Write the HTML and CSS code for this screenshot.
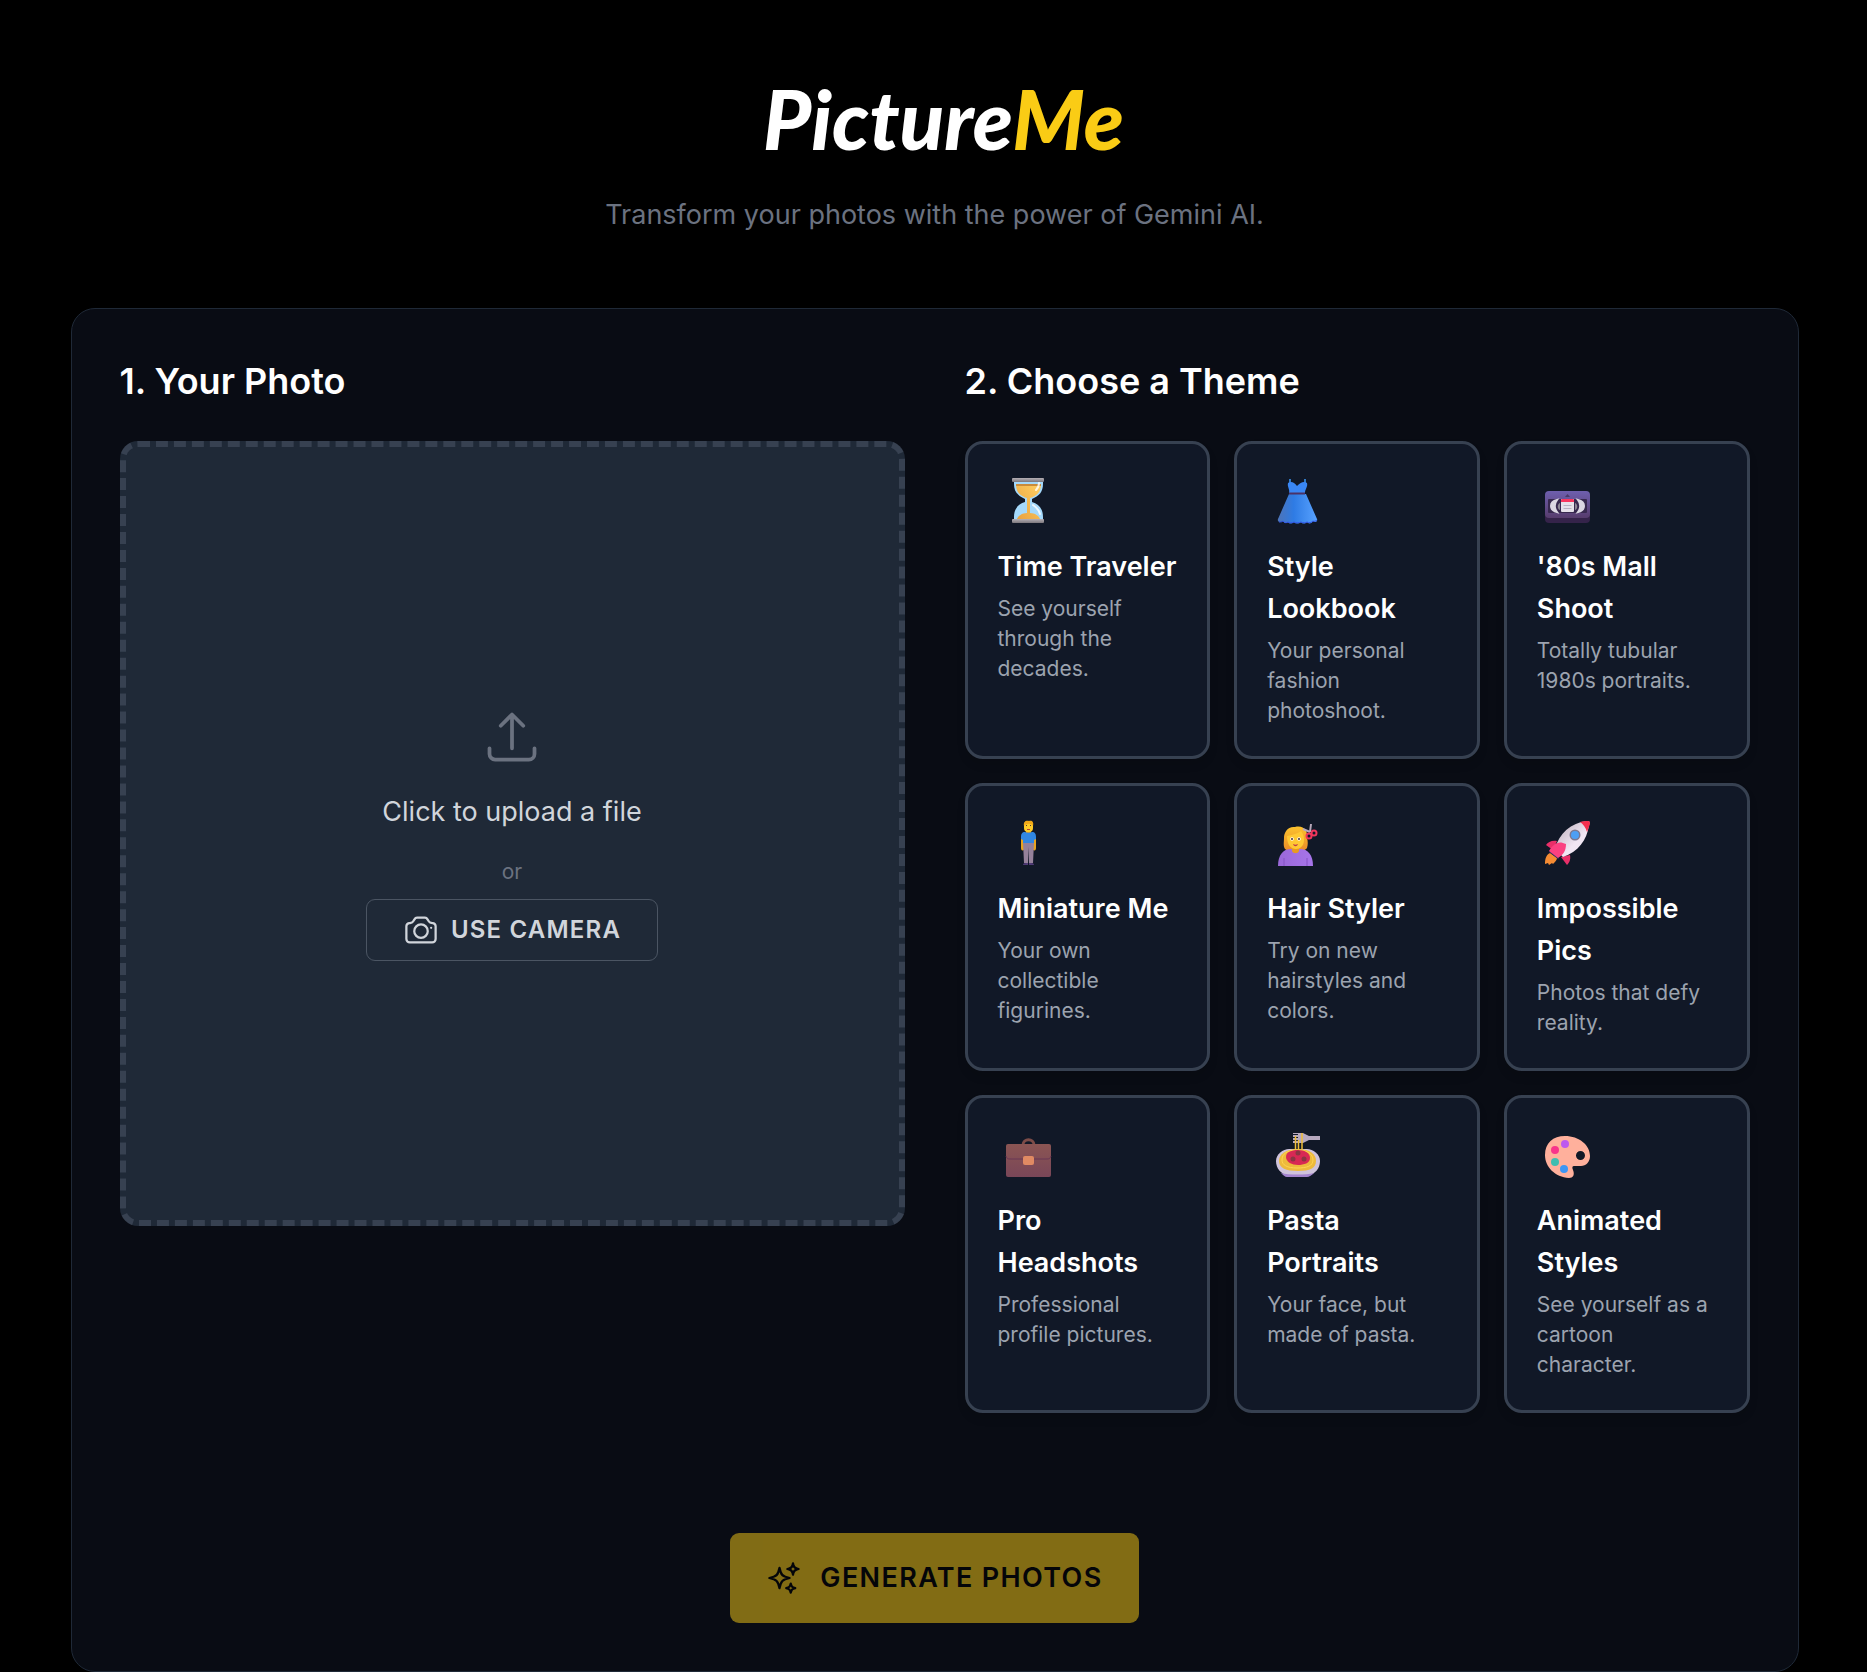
FILE: index.html
```html
<!DOCTYPE html>
<html lang="en">
<head>
  <meta charset="UTF-8">
  <meta name="viewport" content="width=device-width, initial-scale=1.0">
  <title>PictureMe</title>
  <link rel="stylesheet" href="styles.css">
</head>
<body>
  <div class="container">
    <header class="header">
      <h1 class="logo">Picture<span>Me</span></h1>
      <p class="tagline">Transform your photos with the power of Gemini AI.</p>
    </header>

    <main class="panel">
      <div class="columns">
        <section>
          <h2>1. Your Photo</h2>
          <div class="dropzone">
            <input type="file" id="photo" class="file-input" accept="image/*">
            <label for="photo" class="upload-label">
              <svg class="upload-icon" viewBox="0 0 24 24" fill="none" stroke="currentColor" stroke-width="1.5" stroke-linecap="round" stroke-linejoin="round">
                <path d="M3 16.5v2.25A2.25 2.25 0 0 0 5.25 21h13.5A2.25 2.25 0 0 0 21 18.75V16.5m-13.5-9L12 3m0 0 4.5 4.5M12 3v13.5"/>
              </svg>
              Click to upload a file
            </label>
            <span class="or">or</span>
            <button type="button" class="camera-button">
              <svg class="button-icon" viewBox="0 0 24 24" fill="none" stroke="currentColor" stroke-width="1.5" stroke-linecap="round" stroke-linejoin="round">
                <path d="M6.827 6.175A2.31 2.31 0 0 1 5.186 7.23c-.38.054-.757.112-1.134.175C2.999 7.58 2.25 8.507 2.25 9.574V18a2.25 2.25 0 0 0 2.25 2.25h15A2.25 2.25 0 0 0 21.75 18V9.574c0-1.067-.75-1.994-1.802-2.169a47.865 47.865 0 0 0-1.134-.175 2.31 2.31 0 0 1-1.64-1.055l-.822-1.316a2.192 2.192 0 0 0-1.736-1.039 48.774 48.774 0 0 0-5.232 0 2.192 2.192 0 0 0-1.736 1.039l-.821 1.316Z"/>
                <path d="M16.5 12.75a4.5 4.5 0 1 1-9 0 4.5 4.5 0 0 1 9 0ZM18.75 10.5h.008v.008h-.008V10.5Z"/>
              </svg>
              USE CAMERA
            </button>
          </div>
        </section>

        <section>
          <h2>2. Choose a Theme</h2>
          <div class="themes">
            <button type="button" class="theme">
              <svg class="emoji" viewBox="0 0 60 60">
                <defs>
                  <linearGradient id="sand" x1="0" x2="1" y1="1" y2="0">
                    <stop offset="0" stop-color="#e9a13f"/>
                    <stop offset="1" stop-color="#ffd063"/>
                  </linearGradient>
                  <linearGradient id="metal" x1="0" x2="0" y1="0" y2="1">
                    <stop offset="0" stop-color="#b5afb5"/>
                    <stop offset="1" stop-color="#7c777c"/>
                  </linearGradient>
                </defs>
                <path d="M16 7h29v3c0 8-4 12-11 15v3c7 2 11 7 11 15v3H16v-3c0-8 4-13 11-15v-3c-7-3-11-7-11-15z" fill="#a5d9fb"/>
                <path d="M18 10h25c0 8-4 12-11 14v15c5 0 9 3 10 6H19c1-3 5-6 10-6V24c-7-2-11-6-11-14z" fill="url(#sand)"/>
                <path d="M18 10h25v2H18z" fill="#c98b3b"/>
                <path d="M41 9c0 3-1 5-3 7M35 31c3 2 6 5 7 9" fill="none" stroke="#fff" stroke-width="2" stroke-linecap="round" opacity=".8"/>
                <rect x="14" y="4" width="32" height="4" rx="1" fill="url(#metal)"/>
                <rect x="14" y="45" width="32" height="4" rx="1" fill="url(#metal)"/>
              </svg>
              <span class="theme-name">Time Traveler</span>
              <span class="theme-text">See yourself through the decades.</span>
            </button>

            <button type="button" class="theme">
              <svg class="emoji" viewBox="0 0 60 60">
                <defs>
                  <linearGradient id="dress" x1="0" x2="1" y1="0" y2="0">
                    <stop offset="0" stop-color="#4d74b8"/>
                    <stop offset=".4" stop-color="#2e7be4"/>
                    <stop offset="1" stop-color="#58a2ff"/>
                  </linearGradient>
                </defs>
                <path d="M23 5v5M38 5v5" stroke="#3179c4" stroke-width="2"/>
                <path d="M21 9c3-2 6-1 9 3 4-4 7-5 10-3 1 4-2 6-2 10l-2 2H24l-2-2c1-4-2-6-1-10z" fill="#3a87f5"/>
                <path d="M22 20h17l11 25c1 3-2 4-4 2-1 3-5 3-6 1-2 2-5 2-6 0-2 2-6 2-7 0-2 2-5 2-6 0-2 2-4 1-5-1-3 2-6 1-5-2z" fill="url(#dress)"/>
                <path d="M12 48c2 0 3 0 4-1 1 2 4 2 5 1 1 1 4 1 6 0 2 1 5 1 7 0 2 1 5 1 6 0 2 1 4 1 6-1 1 1 3 0 4-1" fill="none" stroke="#3557e8"/>
                <path d="M22 19.500h16" stroke="#4b3267" stroke-width="2"/>
              </svg>
              <span class="theme-name">Style Lookbook</span>
              <span class="theme-text">Your personal fashion photoshoot.</span>
            </button>

            <button type="button" class="theme">
              <svg class="emoji" viewBox="0 0 60 60">
                <defs>
                  <linearGradient id="tape" x1="0" x2="0" y1="0" y2="1">
                    <stop offset="0" stop-color="#6e5fae"/>
                    <stop offset="1" stop-color="#573c6d"/>
                  </linearGradient>
                </defs>
                <rect x="8" y="22" width="45" height="27" rx="4" fill="#35234a"/>
                <rect x="8" y="17" width="45" height="27" rx="4" fill="url(#tape)"/>
                <rect x="11" y="25" width="39" height="14" rx="1" fill="#38294f"/>
                <path d="M20 26c-4 1-6 3-6 6s2 5 6 6c-3-4-3-8 0-12zM41 26c4 1 6 3 6 6s-2 5-6 6c3-4 3-8 0-12z" fill="#dcd7e3" stroke="#dcd7e3" stroke-width="2"/>
                <path d="M23 29c-3 1-3 6 0 7zM38 29c3 1 3 6 0 7z" fill="#8c8594"/>
                <rect x="24" y="25" width="13" height="13" rx="1" fill="#e6e1ea"/>
                <path d="M24 28v-2l1-1h11l1 1v2z" fill="#f8375f"/>
                <path d="M26.500 31.500h8M26.500 34.500h8" stroke="#b9b2c1"/>
                <path d="M28 23l2.500-3 2.500 3z" fill="#493a68"/>
              </svg>
              <span class="theme-name">'80s Mall Shoot</span>
              <span class="theme-text">Totally tubular 1980s portraits.</span>
            </button>

            <button type="button" class="theme">
              <svg class="emoji" viewBox="0 0 60 60">
                <path d="M23 21v11c0 2 1 3 3 2V20zM38 21v11c0 2-1 3-3 2V20z" fill="#e9a51e"/>
                <path d="M28 13h5v5h-5z" fill="#e9a11e"/>
                <rect x="26" y="5" width="9" height="11" rx="4" fill="#ffca28"/>
                <path d="M26 10c-1-4 2-6 5-5 3-1 5 1 4 5-1-3-7-3-9 0z" fill="#f2a817"/>
                <path d="M28 9.500h1M32 9.500h1" stroke="#5b3a32"/>
                <path d="M29 13.500h3" stroke="#b74733"/>
                <path d="M27 16c2 1 5 1 7 0 3 0 4 2 4 5v2l-2 1v4H25v-4l-2-1v-2c0-3 1-5 4-5z" fill="#3187e2"/>
                <path d="M25 27h11l-1 20h-4l-.5-16-.5 16h-4z" fill="#96819a"/>
                <path d="M25 49c0-2 2-2 5-2v2zM31 47c3 0 5 0 5 2h-5z" fill="#503a76"/>
              </svg>
              <span class="theme-name">Miniature Me</span>
              <span class="theme-text">Your own collectible figurines.</span>
            </button>

            <button type="button" class="theme">
              <svg class="emoji" viewBox="0 0 60 60">
                <defs>
                  <linearGradient id="shirt" x1="0" x2="1" y1="0" y2="0">
                    <stop offset="0" stop-color="#9a68d8"/>
                    <stop offset="1" stop-color="#a775ea"/>
                  </linearGradient>
                  <linearGradient id="hair" x1="0" x2="0" y1="0" y2="1">
                    <stop offset="0" stop-color="#fcc22e"/>
                    <stop offset="1" stop-color="#e98a27"/>
                  </linearGradient>
                </defs>
                <path d="M28 11c9-2 13 4 12 11 1 3 1 7 0 10-4 5-18 5-22 1-2-3-1-7-1-11 0-6 4-12 11-11z" fill="url(#hair)"/>
                <path d="M11 50c0-11 5-17 13-17h9c8 0 13 6 13 17z" fill="url(#shirt)"/>
                <path d="M17 42v8M40 42v8" stroke="#8553c4"/>
                <path d="M25 30h7v5c-1 3-6 3-7 0z" fill="#e89b1f"/>
                <path d="M20 20c5-1 10-2 14-5 2 3 3 5 3 9 0 6-4 9-8 9-5 0-9-4-9-13z" fill="#ffc933"/>
                <circle cx="25" cy="23" r="1.800" fill="#fff"/>
                <circle cx="32" cy="23" r="1.800" fill="#fff"/>
                <circle cx="25" cy="23" r="1" fill="#442b32"/>
                <circle cx="32" cy="23" r="1" fill="#442b32"/>
                <path d="M26 28c2 1 3 1 5 0-1 3-4 3-5 0z" fill="#c23b4a"/>
                <path d="M36 13l7 3M44 8l-1 8" stroke="#b7a7b9" stroke-width="2"/>
                <circle cx="42" cy="20" r="2.500" fill="none" stroke="#f0365c" stroke-width="2"/>
                <circle cx="47" cy="17" r="2.500" fill="none" stroke="#f0365c" stroke-width="2"/>
              </svg>
              <span class="theme-name">Hair Styler</span>
              <span class="theme-text">Try on new hairstyles and colors.</span>
            </button>

            <button type="button" class="theme">
              <svg class="emoji" viewBox="0 0 60 60">
                <defs>
                  <linearGradient id="hull" x1="0" x2="1" y1="0" y2="1">
                    <stop offset=".2" stop-color="#c9bcc9"/>
                    <stop offset=".6" stop-color="#f1e6f3"/>
                  </linearGradient>
                </defs>
                <path d="M13 37c-4 2-5 6-5 11l3-1 1 2 3-2 1 1c2-2 4-4 4-6z" fill="#f58b33"/>
                <path d="M20 25c-5-1-9 1-11 4l7 5zM33 39c1 5-1 8-3 10l-6-8z" fill="#e92f69"/>
                <path d="M18 33C22 17 34 7 50 5c3 0 3 1 2 4-2 15-11 27-26 32z" fill="url(#hull)"/>
                <path d="M43 6c3-1 5-1 8-1 2 0 2 1 2 3-1 3-2 5-3 8-1-4-4-8-7-10z" fill="#f42f4e"/>
                <path d="M13 35l9 7-1 1-9-7z" fill="#36336f"/>
                <path d="M12 35c4-7 9-11 17-7 0 7-3 11-8 14z" fill="#fb4181"/>
                <circle cx="38" cy="19" r="5.500" fill="#7c7890"/>
                <circle cx="38" cy="19" r="4" fill="#4d9ff4"/>
              </svg>
              <span class="theme-name">Impossible Pics</span>
              <span class="theme-text">Photos that defy reality.</span>
            </button>

            <button type="button" class="theme">
              <svg class="emoji" viewBox="0 0 60 60">
                <defs>
                  <linearGradient id="leather" x1="0" x2="0" y1="0" y2="1">
                    <stop offset="0" stop-color="#8b5553"/>
                    <stop offset="1" stop-color="#794658"/>
                  </linearGradient>
                </defs>
                <path d="M25 17c0-7 11-7 11 0" fill="none" stroke="#7d4c48" stroke-width="3"/>
                <rect x="8" y="16" width="45" height="33" rx="2" fill="url(#leather)"/>
                <path d="M8 28c1 3 2 3 5 3h35c3 0 4 0 5-3" fill="none" stroke="#693654"/>
                <rect x="25" y="28" width="11" height="9" rx="2" fill="#e08a63"/>
              </svg>
              <span class="theme-name">Pro Headshots</span>
              <span class="theme-text">Professional profile pictures.</span>
            </button>

            <button type="button" class="theme">
              <svg class="emoji" viewBox="0 0 60 60">
                <path d="M9 33c0-7 7-12 13-12h18c6 0 13 5 13 12 0 8-5 12-11 15H20C14 45 9 41 9 33z" fill="#cfc3dc"/>
                <path d="M14 45c8 2 25 2 33 0-2 2-5 4-7 4H20c-2 0-4-2-6-4z" fill="#a484ce"/>
                <path d="M12 33c0-7 7-12 19-12s18 5 18 12-6 10-18 10-19-3-19-10z" fill="#edba3c"/>
                <path d="M15 32c0-6 5-10 15-10s16 4 16 10-6 8-16 8-15-3-15-8z" fill="none" stroke="#ffd552"/>
                <path d="M19 29c0-5 5-7 12-7s12 3 12 8-6 7-12 7-12-3-12-8z" fill="#d82854"/>
                <circle cx="31" cy="25" r="2.500" fill="#8c3542"/>
                <circle cx="26" cy="31" r="2.500" fill="#8c3542"/>
                <circle cx="37" cy="31" r="2.500" fill="#8c3542"/>
                <path d="M26 5h10l6 3h11v4H42l-6 3H26v-2h5v-1h-5v-2h5V9h-5V7h5V6h-5z" fill="#b7a9bf"/>
                <path d="M28.500 8v13M31.500 12v9M35 5v16" stroke="#efbd35" stroke-width="1.500" fill="none"/>
              </svg>
              <span class="theme-name">Pasta Portraits</span>
              <span class="theme-text">Your face, but made of pasta.</span>
            </button>

            <button type="button" class="theme">
              <svg class="emoji" viewBox="0 0 60 60">
                <path fill-rule="evenodd" d="M28 8c14 0 25 9 25 20 0 6-4 10-9 10h-7c-2 0-2 2-1 4 2 5 0 8-4 8C18 49 8 39 8 27 8 15 16 8 28 8zm15.500 15a4.500 4.500 0 1 0 0 9 4.500 4.500 0 0 0 0-9z" fill="#ffb09c"/>
                <circle cx="28" cy="16" r="4" fill="#bd59ef"/>
                <circle cx="18" cy="22" r="4" fill="#f8358b"/>
                <circle cx="18" cy="34" r="4" fill="#3fbdb0"/>
                <circle cx="27" cy="41" r="4" fill="#3d96f5"/>
              </svg>
              <span class="theme-name">Animated Styles</span>
              <span class="theme-text">See yourself as a cartoon character.</span>
            </button>
          </div>
        </section>
      </div>

      <div class="actions">
        <button type="button" class="generate-button" disabled>
          <svg class="button-icon" viewBox="0 0 24 24" fill="none" stroke="currentColor" stroke-width="1.5" stroke-linecap="round" stroke-linejoin="round">
            <path d="M9.813 15.904 9 18.750l-.813-2.846a4.500 4.500 0 0 0-3.090-3.090L2.250 12l2.846-.813a4.500 4.500 0 0 0 3.090-3.090L9 5.250l.813 2.846a4.500 4.500 0 0 0 3.090 3.090L15.750 12l-2.846.813a4.500 4.500 0 0 0-3.090 3.090ZM18.259 8.715 18 9.750l-.259-1.035a3.375 3.375 0 0 0-2.455-2.456L14.250 6l1.036-.259a3.375 3.375 0 0 0 2.455-2.456L18 2.250l.259 1.035a3.375 3.375 0 0 0 2.456 2.456L21.750 6l-1.035.259a3.375 3.375 0 0 0-2.456 2.456ZM16.894 20.567 16.500 21.750l-.394-1.183a2.250 2.250 0 0 0-1.423-1.423L13.500 18.750l1.183-.394a2.250 2.250 0 0 0 1.423-1.423l.394-1.183.394 1.183a2.250 2.250 0 0 0 1.423 1.423l1.183.394-1.183.394a2.250 2.250 0 0 0-1.423 1.423Z"/>
          </svg>
          GENERATE PHOTOS
        </button>
      </div>
    </main>
  </div>
</body>
</html>
```

FILE: styles.css
```css
* {
  box-sizing: border-box;
}

body {
  margin: 0;
  padding: 48px 0 0 2px;
  background-color: #000;
  color: #fff;
  font-family: Inter, "Liberation Sans", sans-serif;
}

.container {
  max-width: 1728px;
  margin: 0 auto;
}

.header {
  text-align: center;
  margin-bottom: 72px;
}

.logo {
  margin: 0 0 6px;
  padding-left: 18px;
  font-family: Lato, sans-serif;
  font-size: 82px;
  font-style: italic;
  font-weight: 900;
  line-height: 140px;
}

.logo span {
  color: #facc15;
}

.tagline {
  margin: 0;
  color: #6b7280;
  font-size: 27px;
  line-height: 42px;
}

.panel {
  padding: 48px;
  background-color: #090c14;
  border: 1px solid #1f2937;
  border-radius: 24px;
}

.columns {
  display: grid;
  grid-template-columns: 1fr 1fr;
  align-items: start;
  gap: 60px;
}

h2 {
  margin: 0 0 36px;
  font-size: 36px;
  font-weight: 600;
  line-height: 48px;
}

/* Upload box */
.dropzone {
  display: flex;
  flex-direction: column;
  align-items: center;
  justify-content: center;
  aspect-ratio: 1;
  background-color: #1f2937;
  border: 6px dashed #374151;
  border-radius: 18px;
}

.file-input {
  position: absolute;
  width: 1px;
  height: 1px;
  opacity: 0;
}

.upload-label {
  display: flex;
  flex-direction: column;
  align-items: center;
  gap: 24px;
  color: #d1d5db;
  font-size: 27px;
  line-height: 42px;
  cursor: pointer;
}

.upload-icon {
  width: 60px;
  height: 60px;
  color: #6b7280;
}

.or {
  margin: 24px 0 12px;
  color: #6b7280;
  font-size: 21px;
  line-height: 30px;
}

button {
  font-family: inherit;
  cursor: pointer;
}

.button-icon {
  width: 36px;
  height: 36px;
}

.camera-button {
  display: flex;
  align-items: center;
  gap: 12px;
  padding: 12px 36px;
  background-color: transparent;
  color: #d1d5db;
  border: 1px solid #4b5563;
  border-radius: 9px;
  font-size: 24px;
  font-weight: 600;
  line-height: 36px;
  letter-spacing: 0.05em;
}

/* Theme cards */
.themes {
  display: grid;
  grid-template-columns: repeat(3, 1fr);
  gap: 24px;
}

.theme {
  display: flex;
  flex-direction: column;
  align-items: flex-start;
  justify-content: flex-start;
  padding: 30px;
  background-color: #111827;
  color: #fff;
  border: 3px solid #374151;
  border-radius: 18px;
  box-shadow: 0 6px 9px rgba(0, 0, 0, 0.1);
  text-align: left;
}

.emoji {
  width: 60px;
  height: 60px;
  margin-bottom: 12px;
}

.theme-name {
  font-size: 27px;
  font-weight: 600;
  line-height: 42px;
}

.theme-text {
  margin-top: 6px;
  color: #9ca3af;
  font-size: 21px;
  line-height: 30px;
}

.actions {
  display: flex;
  justify-content: center;
  margin-top: 120px;
}

.generate-button {
  display: flex;
  align-items: center;
  gap: 18px;
  padding: 24px 36px;
  background-color: #facc15;
  color: #000;
  border: none;
  border-radius: 9px;
  font-size: 27px;
  font-weight: 600;
  line-height: 42px;
  letter-spacing: 0.05em;
}

.generate-button:disabled {
  opacity: 0.5;
  cursor: not-allowed;
}

@media (max-width: 1100px) {
  .columns {
    grid-template-columns: 1fr;
  }
}
```
